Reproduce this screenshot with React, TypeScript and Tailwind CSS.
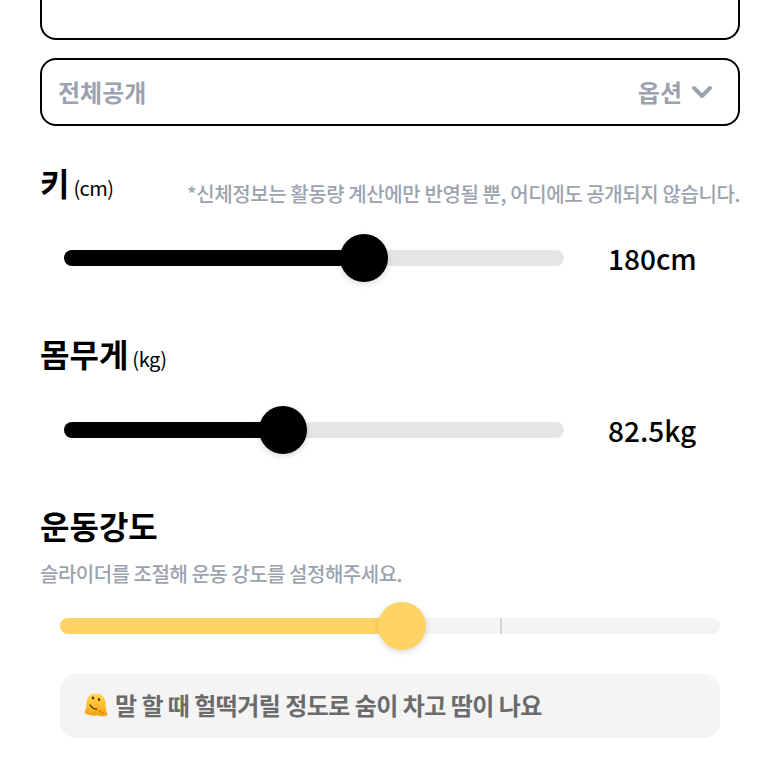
import React from 'react';
import { ChevronDown } from 'lucide-react';

const FONT = "font-['Noto_Sans_CJK_KR','Noto_Sans',sans-serif]";

interface SliderRowProps {
  percent: number;
  value: string;
}

function BodySlider({ percent, value }: SliderRowProps) {
  return (
    <div className="flex items-center pl-6">
      <div className="relative h-4 w-[500px] rounded-full bg-[#e5e5e5]">
        <div className="h-4 rounded-full bg-black" style={{ width: `${percent}%` }} />
        <div
          className="absolute top-1/2 h-12 w-12 -translate-x-1/2 -translate-y-1/2 rounded-full bg-black shadow-[0_2px_6px_rgba(0,0,0,0.15)]"
          style={{ left: `${percent}%` }}
        />
      </div>
      <span className="ml-11 text-[28px] leading-none font-medium text-black">{value}</span>
    </div>
  );
}

// melting face, the emoji font here draws it too differently
function MeltingFace() {
  return (
    <svg viewBox="0 0 24 24" className="mr-[7px] h-6 w-6 shrink-0" role="img" aria-label="melting face">
      <defs>
        <linearGradient id="melt" x1="0" y1="0" x2="0" y2="1">
          <stop offset="0" stopColor="#ffd84a" />
          <stop offset="0.6" stopColor="#fdb92a" />
          <stop offset="1" stopColor="#f59e0b" />
        </linearGradient>
      </defs>
      <path
        d="M12 0.5C6.5 0.5 2.5 4.5 2.5 10C2.5 13 2.2 15.5 1.2 17.5C0.3 19.3 0.6 21 2.3 21.3C3.5 21.5 4.5 22 6 22C7.5 22 8.5 23 10 23C11.5 23 12.5 22 14 22.4C15.5 22.9 17 23.6 19 23.2C21 22.8 23.4 23 23.5 21.5C23.6 20.3 22.6 19.6 22.3 18C21.8 15.5 21.8 13 21.6 10C21.2 4.5 17.5 0.5 12 0.5Z"
        fill="url(#melt)"
      />
      <ellipse cx="9" cy="5" rx="1.1" ry="1.6" fill="#4a3000" transform="rotate(-15 9 5)" />
      <ellipse cx="15" cy="6.5" rx="1.1" ry="1.6" fill="#4a3000" transform="rotate(-15 15 6.5)" />
      <path d="M6 12C7.5 14.5 10 16 12.5 16.2" fill="none" stroke="#4a3000" strokeWidth="1.4" strokeLinecap="round" />
      <circle cx="16" cy="18" r="0.8" fill="#b45309" />
      <circle cx="18.5" cy="20" r="0.7" fill="#b45309" />
    </svg>
  );
}

export default function App() {
  return (
    <div className={`${FONT} h-[780px] w-[780px] overflow-hidden bg-white px-10`}>
      {/* Textarea cut off at the top */}
      <div className="h-10 rounded-b-2xl border-2 border-t-0 border-black" />

      {/* Visibility select */}
      <div className="mt-[18px] flex h-[68px] items-center justify-between rounded-2xl border-2 border-black pl-4 pr-5 text-[24px] font-bold text-[#9ca3af]">
        <span>전체공개</span>
        <span className="flex items-center gap-1">
          옵션
          <ChevronDown className="h-8 w-8" strokeWidth={3} />
        </span>
      </div>

      {/* Height */}
      <div className="mt-8 flex h-12 items-end justify-between">
        <div className="flex items-baseline gap-1">
          <span className="text-[32px] leading-[48px] font-bold text-black">키</span>
          <span className="text-[20px] tracking-[-0.6px] text-black">(cm)</span>
        </div>
        <span className="-mb-0.5 text-[20px] leading-[28px] font-medium tracking-[-0.4px] text-[#9ca3af]">
          *신체정보는 활동량 계산에만 반영될 뿐, 어디에도 공개되지 않습니다.
        </span>
      </div>
      <div className="mt-[38px]">
        <BodySlider percent={60} value="180cm" />
      </div>

      {/* Weight */}
      <div className="mt-[57px] flex h-12 items-baseline gap-1">
        <span className="text-[32px] leading-[48px] font-bold text-black">몸무게</span>
        <span className="text-[20px] tracking-[-0.4px] text-black">(kg)</span>
      </div>
      <div className="mt-[39px]">
        <BodySlider percent={43.8} value="82.5kg" />
      </div>

      {/* Exercise intensity */}
      <h2 className="mt-[57px] text-[32px] leading-[48px] font-bold text-black">운동강도</h2>
      <p className="mt-[11px] text-[20px] leading-[28px] font-medium tracking-[-0.48px] text-[#9ca3af]">
        슬라이더를 조절해 운동 강도를 설정해주세요.
      </p>
      <div className="relative mx-5 mt-[30px] h-4 rounded-full bg-[#f4f4f5]">
        <div className="h-4 w-[342px] rounded-full bg-[#ffd465]" />
        <div className="absolute left-[440px] top-0 h-4 w-0.5 bg-[#d1d5db]" />
        <div className="absolute left-[342px] top-1/2 h-12 w-12 -translate-x-1/2 -translate-y-1/2 rounded-full bg-[#ffd465] shadow-[0_2px_6px_rgba(0,0,0,0.15)]" />
      </div>
      <div className="mx-5 mt-10 flex h-16 items-center rounded-2xl bg-[#f4f4f5] px-6 pb-0.5 text-[24px] font-bold tracking-[-0.55px] text-[#6b6b6b]">
        <MeltingFace />
        <span>말 할 때 헐떡거릴 정도로 숨이 차고 땀이 나요</span>
      </div>
    </div>
  );
}
